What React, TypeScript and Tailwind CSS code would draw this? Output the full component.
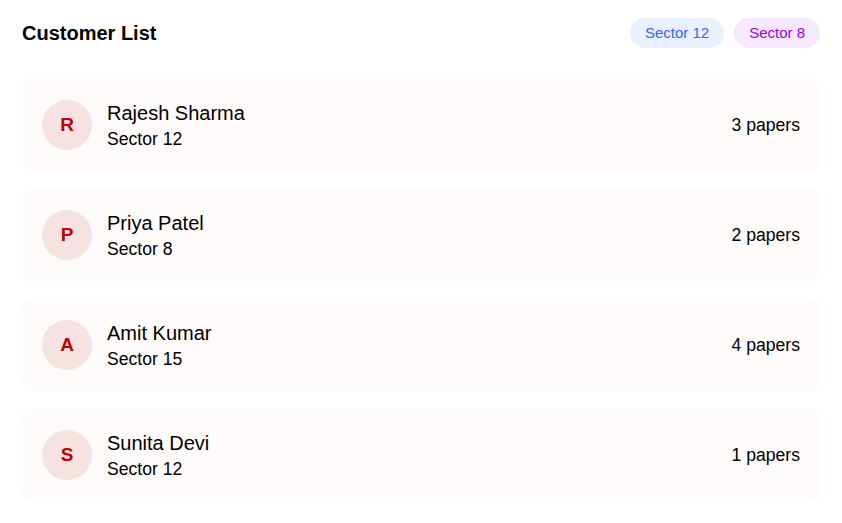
const customers = [
  { name: "Rajesh Sharma", sector: "Sector 12", papers: 3 },
  { name: "Priya Patel", sector: "Sector 8", papers: 2 },
  { name: "Amit Kumar", sector: "Sector 15", papers: 4 },
  { name: "Sunita Devi", sector: "Sector 12", papers: 1 },
]

export default function App() {
  return (
    <div className="min-h-screen w-full bg-white px-[22px] pt-[18px] font-['Liberation_Sans',Arial,sans-serif] text-black">
      {/* header */}
      <div className="flex items-center justify-between h-[30px]">
        <h1 className="text-[20px] font-bold">Customer List</h1>
        <div className="flex items-center gap-[10px]">
          <span className="h-[30px] px-[15px] rounded-full bg-[#e8f1ff] text-[#3366ff] text-[15px] flex items-center">
            Sector 12
          </span>
          <span className="h-[30px] px-[15px] rounded-full bg-[#f5e8ff] text-[#9d00f5] text-[15px] flex items-center">
            Sector 8
          </span>
        </div>
      </div>

      {/* list */}
      <div className="mt-[30px] flex flex-col gap-4">
        {customers.map((c, i) => (
          <div key={i} className="flex items-center justify-between rounded-xl bg-[#fffbfb] px-5 py-[22px]">
            <div className="flex items-center gap-[15px]">
              <div className="w-[50px] h-[50px] rounded-full bg-[#f7e2e2] flex items-center justify-center text-[#c00000] text-[19px] font-bold">
                {c.name[0]}
              </div>
              <div className="flex flex-col h-[50px]">
                <span className="text-[20px] leading-[26px]">{c.name}</span>
                <span className="text-[17.6px] leading-[24px] mt-[1px]">{c.sector}</span>
              </div>
            </div>
            <span className="text-[17.6px]">{c.papers} papers</span>
          </div>
        ))}
      </div>
    </div>
  )
}
